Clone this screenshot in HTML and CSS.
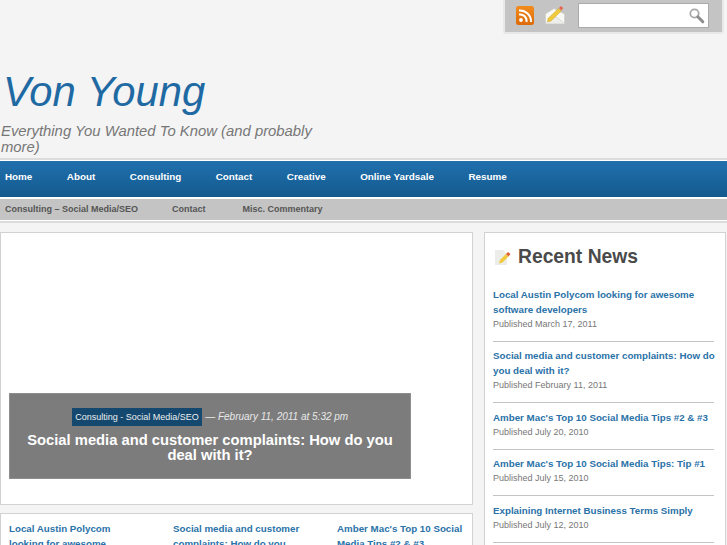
FILE: index.html
```html
<!DOCTYPE html>
<html lang="en">
<head>
  <meta charset="UTF-8" />
  <meta name="viewport" content="width=device-width, initial-scale=1.0" />
  <title>Von Young</title>
  <link rel="stylesheet" href="styles.css">
</head>
<body>
  <div class="top-bar">
    <div class="tools">
      <a class="tool-icon rss" href="#">
        <svg width="18" height="19" viewBox="0 0 18 19">
          <defs>
            <linearGradient id="rss-bg" x1="0" y1="0" x2="0" y2="1">
              <stop offset="0" stop-color="#f28c1e" />
              <stop offset="1" stop-color="#dc6a08" />
            </linearGradient>
          </defs>
          <rect width="18" height="19" rx="2.5" fill="url(#rss-bg)" />
          <circle cx="5" cy="14" r="1.9" fill="#fff" />
          <path d="M3 8.500a6.500 6.500 0 0 1 7.500 7.500" fill="none" stroke="#fff" stroke-width="2" />
          <path d="M3 4.500a11 11 0 0 1 12 11.500" fill="none" stroke="#fff" stroke-width="2" />
        </svg>
      </a>
      <a class="tool-icon mail" href="#">
        <svg width="20" height="19" viewBox="0 0 20 19">
          <path d="M0.500 9L9 3.500 19.500 9v9.500H.5z" fill="#f8f8f4" stroke="#cfcfca" stroke-width="0.8" />
          <path d="M.5 18.500L8 12.500h4l7.500 6" fill="#eeeeea" stroke="#d4d4ce" stroke-width="0.8" />
          <path d="M3 13.500L13.500 3.500l2.800 2.500L6 16 2.500 16.800z" fill="#f0c93c" stroke="#cda72a" stroke-width="0.5" />
          <path d="M14 3L16 1l2 2-1.500 2.500z" fill="#e8634a" />
        </svg>
      </a>
      <form class="search-box">
        <svg width="17" height="17" viewBox="0 0 17 17">
          <circle cx="6.500" cy="6.500" r="4.200" fill="none" stroke="#a8a8a8" stroke-width="1.800" />
          <path d="M9.800 9.800l5 5" stroke="#8c8c8c" stroke-width="3" stroke-linecap="round" />
        </svg>
      </form>
    </div>
  </div>

  <header class="site-head">
    <h1>Von Young</h1>
    <p class="tagline">Everything You Wanted To Know (and probably more)</p>
  </header>

  <div class="nav-wrap">
    <nav class="main-nav">
      <a href="#">Home</a>
      <a href="#">About</a>
      <a href="#">Consulting</a>
      <a href="#">Contact</a>
      <a href="#">Creative</a>
      <a href="#">Online Yardsale</a>
      <a href="#">Resume</a>
    </nav>

    <nav class="sub-nav">
      <a href="#">Consulting – Social Media/SEO</a>
      <a href="#">Contact</a>
      <a href="#">Misc. Commentary</a>
    </nav>
  </div>

  <div class="content">
    <main class="main-col">
      <section class="feature">
        <div class="feature-caption">
          <div class="feature-meta">
            <span class="cat">Consulting - Social Media/SEO</span>
            <em>— February 11, 2011 at 5:32 pm</em>
          </div>
          <h2>Social media and customer complaints: How do you deal with it?</h2>
        </div>
      </section>

      <section class="teasers">
        <a href="#">Local Austin Polycom looking for awesome software developers</a>
        <a href="#">Social media and customer complaints: How do you deal with it?</a>
        <a href="#">Amber Mac's Top 10 Social Media Tips #2 &amp; #3</a>
      </section>
    </main>

    <aside class="sidebar">
      <h2 class="side-title">
        <svg width="17" height="17" viewBox="0 0 17 17">
          <path d="M1 1h8l4 4v11H1z" fill="#ececE8" />
          <path d="M5 14.500l1-3.500 6-6 2.500 2.500-6 6z" fill="#f0c93c" />
          <path d="M12 5l2-2 2.500 2-2 2.500z" fill="#e0603a" />
        </svg>
        Recent News
      </h2>
      <ul class="news">
        <li><a href="#">Local Austin Polycom looking for awesome software developers</a><span>Published March 17, 2011</span></li>
        <li><a href="#">Social media and customer complaints: How do you deal with it?</a><span>Published February 11, 2011</span></li>
        <li><a href="#">Amber Mac's Top 10 Social Media Tips #2 &amp; #3</a><span>Published July 20, 2010</span></li>
        <li><a href="#">Amber Mac's Top 10 Social Media Tips: Tip #1</a><span>Published July 15, 2010</span></li>
        <li><a href="#">Explaining Internet Business Terms Simply</a><span>Published July 12, 2010</span></li>
      </ul>
    </aside>
  </div>
</body>
</html>
```

FILE: styles.css
```css
:root {
  --blue: #1f6aa3;
  --link: #2a72a8;
  --line: #d2d2d2;
  --grey-bar: #c4c4c4;
}

* {
  margin: 0;
  padding: 0;
  box-sizing: border-box;
}

html {
  overflow: hidden;
}

body {
  font-family: "Liberation Sans", Arial, sans-serif;
  background: #f4f4f4;
  color: #555;
  height: 545px;
  overflow: hidden;
}

a {
  text-decoration: none;
}

.top-bar {
  display: flex;
  justify-content: flex-end;
  height: 36px;
  padding-right: 3px;
}

.tools {
  width: 221px;
  height: 34px;
  background: var(--grey-bar);
  border: 2px solid #e8e8e8;
  border-top: 0;
  border-radius: 0 0 3px 3px;
  display: flex;
  align-items: flex-start;
  padding-left: 11px;
}

.tool-icon {
  display: block;
}

.rss {
  margin-top: 6px;
}

.mail {
  margin: 5px 0 0 11px;
}

.search-box {
  width: 131px;
  height: 25px;
  margin: 3px 0 0 13px;
  background: #fff;
  border: 1px solid #aaa;
  display: flex;
  justify-content: flex-end;
  align-items: center;
  padding-right: 3px;
}

.site-head {
  height: 122px;
  padding-top: 32px;
}

.site-head h1 {
  font-size: 41.800px;
  font-weight: normal;
  font-style: italic;
  line-height: 48px;
  color: var(--blue);
  padding-left: 3px;
}

.tagline {
  width: 330px;
  margin-top: 7px;
  padding-left: 1px;
  font-size: 14.850px;
  line-height: 16px;
  font-style: italic;
  color: #777;
}

.nav-wrap {
  background: #fff;
  border-top: 2px solid #dcdcdc;
  border-bottom: 2px solid #dcdcdc;
  padding: 1px 0;
  display: grid;
  gap: 2px;
}

.main-nav {
  height: 36px;
  background: linear-gradient(#2070ae, #145a8e);
  display: flex;
  align-items: center;
  gap: 34.500px;
  padding: 0 0 5px 5px;
}

.main-nav a {
  color: #fff;
  font-size: 9.850px;
  font-weight: bold;
}

.sub-nav {
  height: 21px;
  background: var(--grey-bar);
  display: flex;
  align-items: center;
  gap: 34px;
  padding: 0 0 1px 5px;
}

.sub-nav a {
  color: #555;
  font-size: 9px;
  font-weight: bold;
}

.sub-nav a:nth-child(2) {
  padding-right: 3px;
}

.content {
  display: grid;
  grid-template-columns: 473px 242px;
  gap: 11px;
  margin-top: 9px;
  align-items: start;
}

.main-col {
  display: grid;
  gap: 8px;
}

.feature {
  height: 273px;
  background: #fff;
  border: 1px solid var(--line);
  display: flex;
  align-items: flex-end;
  padding: 0 0 25px 8px;
}

.feature-caption {
  width: 402px;
  height: 86px;
  background: #7c7c7c;
  border: 1px solid #8e8e8e;
  text-align: center;
  padding-top: 14px;
  color: #fff;
}

.feature-meta {
  font-size: 10px;
  line-height: 18px;
  color: #e8e8e8;
}

.feature-meta .cat {
  display: inline-block;
  background: #14486f;
  color: #eee;
  font-size: 9px;
  padding: 0 3.500px;
}

.feature-caption h2 {
  font-size: 14.750px;
  line-height: 15px;
  margin-top: 7px;
  padding: 0 10px;
}

.teasers {
  height: 80px;
  background: #fff;
  border: 1px solid var(--line);
  display: grid;
  grid-template-columns: repeat(3, 130px);
  column-gap: 34px;
  padding: 7px 0 0 8px;
}

.teasers a {
  color: var(--link);
  font-size: 9.750px;
  font-weight: bold;
  line-height: 15px;
}

.sidebar {
  height: 340px;
  background: #fff;
  border: 1px solid var(--line);
  padding: 0 10px 0 8px;
}

.side-title {
  display: flex;
  align-items: center;
  gap: 7px;
  height: 47px;
  font-size: 19.300px;
  color: #4a4a4a;
  padding: 1px 0 0 1px;
}

.news {
  list-style: none;
  padding-top: 7px;
  width: 221px;
}

.news li {
  border-bottom: 1px solid var(--grey-bar);
  padding-bottom: 9px;
  margin-bottom: 6.400px;
}

.news a {
  display: block;
  margin-right: -3px;
  color: var(--link);
  font-size: 9.750px;
  font-weight: bold;
  line-height: 15px;
}

.news span {
  display: block;
  font-size: 9px;
  line-height: 15px;
  color: #777;
}
```
